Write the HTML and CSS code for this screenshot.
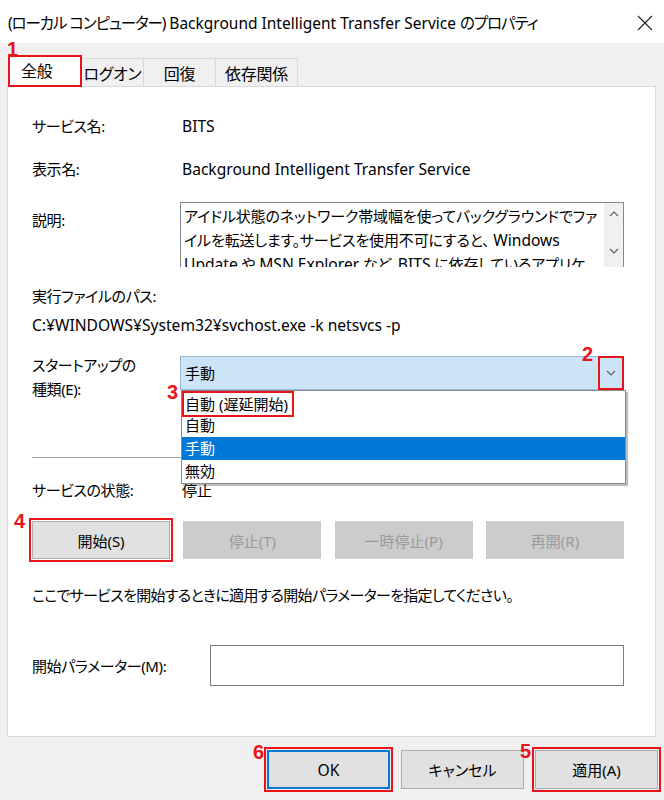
FILE: index.html
```html
<!DOCTYPE html>
<html lang="ja">
<head>
<meta charset="utf-8">
<link rel="stylesheet" href="styles.css">
</head>
<body>
<div class="window">
  <div class="titlebar">
    <span class="title"><span class="jp">(ローカル コンピューター)</span> Background Intelligent Transfer Service <span class="jp">のプロパティ</span></span>
    <svg class="close" width="16" height="16" viewBox="0 0 16 16"><path d="M1 1 L15 15 M15 1 L1 15" stroke="#222" stroke-width="1.1" fill="none"/></svg>
  </div>

  <div class="tabs">
    <div class="tab active"><span class="num n1">1</span>全般</div>
    <div class="tab t-logon">ログオン</div>
    <div class="tab t-recover">回復</div>
    <div class="tab t-dep">依存関係</div>
  </div>

  <div class="panel">
    <div class="row row-name"><span class="label">サービス名:</span><span class="value latin">BITS</span></div>
    <div class="row row-disp"><span class="label">表示名:</span><span class="value latin">Background Intelligent Transfer Service</span></div>
    <div class="row row-desc">
      <span class="label desc-label">説明:</span>
      <div class="descbox">
        <div class="desctext">
          <span class="line">アイドル状態のネットワーク帯域幅を使ってバックグラウンドでファ</span>
          <span class="line">イルを転送します。サービスを使用不可にすると、 <span class="latin">Windows</span></span>
          <span class="line"><span class="latin">Update</span> や <span class="latin">MSN Explorer</span> など、<span class="latin">BITS</span> に依存しているアプリケ</span>
        </div>
        <div class="vscroll">
          <svg width="10" height="6" viewBox="0 0 10 6"><path d="M1 5 L5 1 L9 5" stroke="#606060" stroke-width="1.2" fill="none"/></svg>
          <svg width="10" height="6" viewBox="0 0 10 6"><path d="M1 1 L5 5 L9 1" stroke="#606060" stroke-width="1.2" fill="none"/></svg>
        </div>
      </div>
    </div>
    <div class="pathlabel">実行ファイルのパス:</div>
    <div class="pathvalue latin">C:¥WINDOWS¥System32¥svchost.exe -k netsvcs -p</div>

    <div class="row row-startup">
      <span class="label startup-label">スタートアップの<br>種類(E):</span>
      <div class="combo">
        <span class="combo-text">手動</span>
        <span class="combo-arrow"><span class="num n2">2</span><svg width="10" height="6" viewBox="0 0 10 6"><path d="M1 1 L5 5 L9 1" stroke="#606060" stroke-width="1.2" fill="none"/></svg></span>
        <div class="droplist">
          <div class="item"><span class="num n3">3</span><span class="marked">自動 (遅延開始)</span></div>
          <div class="item">自動</div>
          <div class="item selected">手動</div>
          <div class="item">無効</div>
        </div>
      </div>
    </div>

    <div class="sep"></div>

    <div class="row row-status"><span class="label">サービスの状態:</span><span class="value">停止</span></div>

    <div class="btnrow">
      <button class="btn start"><span class="num n4">4</span>開始(S)</button>
      <button class="btn disabled">停止(T)</button>
      <button class="btn disabled">一時停止(P)</button>
      <button class="btn disabled">再開(R)</button>
    </div>

    <div class="hint">ここでサービスを開始するときに適用する開始パラメーターを指定してください。</div>

    <div class="row row-param">
      <span class="label param-label">開始パラメーター(M):</span>
      <div class="input"></div>
    </div>
  </div>

  <div class="footer">
    <button class="fbtn ok"><span class="num n6">6</span><span class="latin">OK</span></button>
    <button class="fbtn">キャンセル</button>
    <button class="fbtn apply"><span class="num n5">5</span>適用(A)</button>
  </div>
</div>
</body>
</html>
```

FILE: styles.css
```css
* { box-sizing: border-box; }

html, body {
  margin: 0;
  padding: 0;
}

body {
  width: 664px;
  height: 800px;
  overflow: hidden;
  background: #f0f0f0;
  font-family: "Noto Sans", "Noto Sans CJK JP", sans-serif;
  font-feature-settings: "palt";
  font-size: 15px;
  color: #000;
}

.window {
  width: 664px;
  height: 800px;
}

.latin { font-size: 15.6px; letter-spacing: 0; }

/* title bar */
.titlebar {
  height: 43px;
  background: #fff;
  display: flex;
  align-items: center;
  justify-content: space-between;
  padding: 2px 11px 0 8px;
  font-size: 15.5px;
}

.title { white-space: nowrap; }
.title .jp { letter-spacing: -1.1px; }

.close { display: block; }

/* tabs */
.tabs {
  display: flex;
  align-items: flex-end;
  height: 32px;
  margin: 12px 0 -1px 8px;
  position: relative;
  z-index: 2;
  font-size: 16px;
}

.tab {
  height: 28px;
  margin-bottom: 1px;
  border: 1px solid #d9d9d9;
  border-left: none;
  border-bottom: none;
  background: #f0f0f0;
  display: flex;
  align-items: center;
  justify-content: center;
  line-height: 1;
  padding-top: 3px;
  letter-spacing: -0.3px;
}

.tab.active {
  position: relative;
  width: 74px;
  height: 32px;
  margin-bottom: 0;
  background: #fff;
  border-left: 1px solid #d9d9d9;
  justify-content: flex-start;
  padding: 0 0 2px 12px;
  outline: 2px solid #e8141b;
  outline-offset: -2px;
}

.t-logon { width: 62px; }
.t-recover { width: 72px; }
.t-dep { width: 82px; }

/* panel */
.panel {
  margin: 0 8px 0 7px;
  height: 651px;
  background: #fff;
  border: 1px solid #d9d9d9;
  padding: 0 31px 0 24px;
  position: relative;
  z-index: 1;
}

.row {
  display: flex;
  align-items: flex-start;
  line-height: 20px;
}

.label {
  width: 148px;
  flex: none;
  white-space: nowrap;
  letter-spacing: -0.4px;
}

.value { padding-left: 2px; white-space: nowrap; }

.row-name { margin-top: 29px; }
.row-disp { margin-top: 23px; }
.row-desc { margin-top: 23px; }

.desc-label { padding-top: 8px; }

.descbox {
  width: 444px;
  height: 65px;
  border: 1px solid #828790;
  border-bottom: none;
  display: flex;
  overflow: hidden;
}

.desctext {
  flex: 1;
  padding: 1px 0 0 3px;
  line-height: 24px;
  letter-spacing: -0.15px;
}

.line {
  display: block;
  white-space: nowrap;
}

.vscroll {
  width: 19px;
  flex: none;
  background: #f0f0f0;
  display: flex;
  flex-direction: column;
  justify-content: space-between;
  align-items: center;
  padding: 8px 0 13px;
}

.vscroll svg { display: block; }

.pathlabel { margin-top: 19px; line-height: 20px; letter-spacing: -0.4px; }
.pathvalue { margin-top: 9px; line-height: 20px; white-space: nowrap; }

.row-startup { margin-top: 18px; }

.startup-label { line-height: 24px; }

.combo {
  position: relative;
  margin-top: 3px;
  width: 444px;
  height: 34px;
  background: #cce4f7;
  border: 1px solid #9ab9d6;
  display: flex;
  align-items: center;
  justify-content: space-between;
}

.combo-text { padding-left: 4px; }

.combo-arrow {
  position: relative;
  width: 26px;
  height: 34px;
  margin: -1px -1px -1px 0;
  display: flex;
  align-items: center;
  justify-content: center;
  outline: 2px solid #e8141b;
  outline-offset: -2px;
}

.droplist {
  position: absolute;
  left: 0;
  top: 33px;
  width: 445px;
  background: #fff;
  border: 1px solid #8a8a8a;
  box-shadow: 2px 2px 1px rgba(0, 0, 0, 0.25);
  z-index: 5;
}

.item {
  position: relative;
  height: 23px;
  line-height: 23px;
  padding-left: 3px;
  white-space: nowrap;
}

.item.selected {
  background: #0078d7;
  color: #fff;
}

.marked {
  display: inline-block;
  margin-left: -3px;
  padding: 0 6px 0 3px;
  height: 26px;
  line-height: 26px;
  outline: 2px solid #e8141b;
  outline-offset: -2px;
}

.sep {
  margin-top: 56px;
  height: 1px;
  background: #a0a0a0;
}

.row-status { margin-top: 22px; }

.btnrow {
  margin-top: 21px;
  display: flex;
  justify-content: space-between;
}

.btn {
  position: relative;
  width: 138px;
  height: 38px;
  font: inherit;
  font-size: 15px;
  border: 1px solid #adadad;
  background: #e1e1e1;
  color: #000;
  padding: 0;
}

.btn.start {
  outline: 2px solid #e8141b;
  outline-offset: 1px;
}

.btn.disabled {
  background: #cccccc;
  border-color: #cccccc;
  color: #9a9a9a;
}

.hint { margin-top: 26px; line-height: 20px; white-space: nowrap; letter-spacing: -0.7px; }

.row-param { margin-top: 40px; align-items: center; }

.param-label { width: 178px; }

.input {
  width: 414px;
  height: 41px;
  border: 1px solid #7a7a7a;
  background: #fff;
}

/* footer */
.footer {
  display: flex;
  justify-content: flex-end;
  gap: 11px;
  padding: 13px 6px 0 0;
}

.fbtn {
  position: relative;
  width: 123px;
  height: 39px;
  font: inherit;
  font-size: 15px;
  border: 1px solid #adadad;
  background: #e1e1e1;
  color: #000;
  padding: 0;
}

.fbtn.ok {
  border: 2px solid #0078d7;
  outline: 2px solid #e8141b;
  outline-offset: 1px;
}

.fbtn.apply {
  outline: 2px solid #e8141b;
  outline-offset: 1px;
}

/* annotation numbers */
.num {
  position: absolute;
  font-family: "Liberation Sans", Arial, sans-serif;
  font-weight: bold;
  font-size: 20px;
  line-height: 1;
  letter-spacing: 0;
  color: #e8141b;
}

.n1 { left: -2px; top: -17px; }
.n2 { left: -16px; top: -12px; }
.n3 { left: -15px; top: -9px; }
.n4 { left: -19px; top: -11px; }
.n5 { left: -16px; top: -10px; }
.n6 { left: -16px; top: -10px; }
```
